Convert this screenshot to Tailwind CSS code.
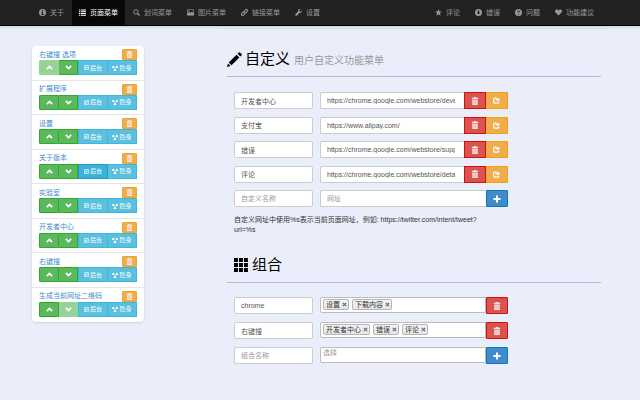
<!DOCTYPE html>
<html lang="zh-CN">
<head>
    <meta charset="UTF-8">
    <meta name="viewport" content="width=device-width, initial-scale=1.0">
    <title>页面菜单</title>
    <script src="https://cdn.jsdelivr.net/npm/@tailwindcss/browser@4"></script>
</head>
<body class="min-h-screen bg-[#eaeefa] font-['Liberation_Sans','Noto_Sans_CJK_SC',sans-serif] text-[7px] leading-[10px] text-[#333]">

    <!-- Icons -->
    <svg class="hidden">
        <symbol id="info" viewBox="0 0 16 16"><path fill="currentColor" fill-rule="evenodd" d="M8 0a8 8 0 1 0 0 16A8 8 0 0 0 8 0zM6.500 2.500h3v2.500h-3zM5.500 6.500h4v5h1.500v2h-5.500v-2h1.500v-3h-1.500z"/></symbol>
        <symbol id="list" viewBox="0 0 16 16"><path fill="currentColor" d="M0 1h3v2.600H0zM4.500 1H16v2.600H4.500zM0 5h3v2.600H0zM4.500 5H16v2.600H4.500zM0 9h3v2.600H0zM4.500 9H16v2.600H4.500zM0 13h3v2.600H0zM4.500 13H16v2.600H4.500z"/></symbol>
        <symbol id="search" viewBox="0 0 16 16"><g fill="none" stroke="currentColor"><circle cx="6.500" cy="6.500" r="5" stroke-width="2.200"/><path d="M10.500 10.500l4.500 4.500" stroke-width="3"/></g></symbol>
        <symbol id="picture" viewBox="0 0 16 16"><path fill="currentColor" fill-rule="evenodd" d="M0 1h16v14H0zM1.500 2.500v8l4-4 2.500 2.500 3-2.500 3.500 3v-7zM4 3.500a1.500 1.500 0 1 1 0 3 1.500 1.500 0 0 1 0-3z"/></symbol>
        <symbol id="link" viewBox="0 0 16 16"><g fill="none" stroke="currentColor" stroke-width="2.200"><rect x="6.500" y="2.500" width="9" height="5.500" rx="2.700" transform="rotate(-50 11 5)"/><rect x=".5" y="8" width="9" height="5.500" rx="2.700" transform="rotate(-50 5 11)"/></g></symbol>
        <symbol id="wrench" viewBox="0 0 16 16"><path fill="currentColor" d="M15.500 3.500l-2.500 2.500-2.500-.5-.5-2.500L12.500.500C9.500-.5 6.500 2 7.200 5.500L.8 12c-1.500 1.800 1.300 4.700 3.200 3.200l6.500-6.400c3.500.7 6-2.300 5-5.300z"/></symbol>
        <symbol id="star" viewBox="0 0 16 16"><path fill="currentColor" d="M8 0l2.200 5.700H16l-4.600 3.700L13 15.500l-5-3.600-5 3.600 1.600-6.100L0 5.700h5.800z"/></symbol>
        <symbol id="down" viewBox="0 0 16 16"><path fill="currentColor" fill-rule="evenodd" d="M8 0a8 8 0 1 0 0 16A8 8 0 0 0 8 0zM6.500 3.500h3v4H12l-4 5-4-5h2.500z"/></symbol>
        <symbol id="question" viewBox="0 0 16 16"><circle cx="8" cy="8" r="8" fill="currentColor"/><path d="M5.500 6.500C5.500 3 10.700 3 10.700 6c0 1.800-2.700 1.700-2.700 3.700M8 11v2" fill="none" stroke="#222" stroke-width="2"/></symbol>
        <symbol id="heart" viewBox="0 0 16 16"><path fill="currentColor" d="M8 15L1.300 8C-1.500 4.500.5 1 4 1c2 0 3.300 1 4 2.500C8.700 2 10 1 12 1c3.500 0 5.500 3.500 2.700 7z"/></symbol>
        <symbol id="trash" viewBox="0 0 16 16"><path fill="currentColor" d="M6 0h4l1 1.500h3.500V4h-13V1.500H5zM2.500 5h11v11h-11z"/><path d="M5.500 7v7M8 7v7M10.500 7v7" stroke="#d9534f" stroke-opacity=".5"/></symbol>
        <symbol id="share" viewBox="0 0 16 16"><path d="M8.500 2.500H4.500a3 3 0 0 0-3 3v5.500a3 3 0 0 0 3 3h6a3 3 0 0 0 3-3v-1" fill="none" stroke="currentColor" stroke-width="2.600"/><path fill="currentColor" d="M10.500 1L16 5.500 10.500 10V7.500C8 7.500 6.500 8.500 5.500 10.500 5.500 6 8 3.700 10.500 3.500z"/></symbol>
        <symbol id="plus" viewBox="0 0 16 16"><path fill="currentColor" d="M6 1h4v5h5v4h-5v5H6v-5H1V6h5z"/></symbol>
        <symbol id="up" viewBox="0 0 16 16"><path d="M2 11.500l6-6 6 6" fill="none" stroke="currentColor" stroke-width="4"/></symbol>
        <symbol id="dn" viewBox="0 0 16 16"><path d="M2 4.500l6 6 6-6" fill="none" stroke="currentColor" stroke-width="4"/></symbol>
        <symbol id="check" viewBox="0 0 16 16"><path d="M1.500 1.500h13v13h-13zM4 5l3.500 6L12 4M4 12l7-6" fill="none" stroke="currentColor" stroke-width="2"/></symbol>
        <symbol id="hazard" viewBox="0 0 16 16"><path fill="currentColor" d="M6.800 6L3.800 1A8 8 0 0 0 0 8h5.600A2.500 2.500 0 0 1 6.800 6zM9.200 6l3-5A8 8 0 0 1 16 8h-5.600a2.500 2.500 0 0 0-1.200-2zM6.800 10.200l-2.800 4.800a8 8 0 0 0 8 0l-2.800-4.800a2.500 2.500 0 0 1-2.400 0z"/><circle cx="8" cy="8" r="1.600" fill="currentColor"/></symbol>
        <symbol id="pencil" viewBox="0 0 16 16"><path fill="currentColor" d="M0 16l1-3.800 2.800 2.800zM1.800 11.200L10.200 2.800 13.200 5.800 4.800 14.200zM11.200 1.800L12.600.4q.6-.5 1.200 0l1.800 1.800q.5.600 0 1.200L14.200 4.800z"/></symbol>
        <symbol id="grid" viewBox="0 0 16 16"><path fill="currentColor" d="M0 0h4.500v4.500H0zM5.700 0h4.500v4.500H5.700zM11.400 0h4.500v4.500h-4.500zM0 5.700h4.500v4.500H0zM5.700 5.700h4.500v4.500H5.700zM11.400 5.700h4.500v4.500h-4.500zM0 11.400h4.500v4.500H0zM5.700 11.400h4.500v4.500H5.700zM11.400 11.400h4.500v4.500h-4.500z"/></symbol>
        <symbol id="close" viewBox="0 0 16 16"><path d="M2.500 2.500l11 11M13.500 2.500l-11 11" stroke="currentColor" stroke-width="3.500"/></symbol>
    </svg>

    <nav class="flex h-[26px] justify-between border-b border-black bg-[#222] pl-8 pr-[39px] text-[#999] shadow-sm">
        <div id="nav-left" class="flex gap-px"></div>
        <div id="nav-right" class="flex gap-px"></div>
    </nav>

    <div class="flex items-start pl-8">
        <ul id="menu" class="mt-5 grid min-h-[276px] w-[112px] shrink-0 auto-rows-fr divide-y divide-[#e5e5e5] rounded bg-white shadow-sm"></ul>

        <main class="ml-[75px] mr-[31px] min-w-0 flex-1">
            <div class="h-[3px] border-x border-b border-[#dcdfe6]"></div>
            <div class="px-2">
                <section>
                    <h1 class="mt-5 flex items-center border-b border-[#b6bad4] pb-[7px] text-[15px] leading-5 text-black">
                        <svg class="mr-[3px] size-[15px]"><use href="#pencil"/></svg>自定义<small class="ml-1 mt-1 text-[10px] leading-4 text-[#999]">用户自定义功能菜单</small>
                    </h1>
                    <div id="customs" class="ml-[7px] mt-[15px] flex min-h-[115px] max-w-[274px] flex-col justify-between"></div>
                    <p class="ml-[7px] mt-2 max-w-[250px]">自定义网址中使用%s表示当前页面网址，例如: https://twitter.com/intent/tweet?url=%s</p>
                </section>
                <section>
                    <h2 class="mt-5 flex items-center border-b border-[#b6bad4] pb-[7px] pl-[7px] text-[15px] leading-5 text-black">
                        <svg class="mr-1 size-[14px]"><use href="#grid"/></svg>组合
                    </h2>
                    <div id="groups" class="ml-[7px] mt-[14px] flex max-w-[274px] flex-col gap-2"></div>
                </section>
            </div>
        </main>
    </div>

    <script>
        const navLeft = [['info', '关于'], ['list', '页面菜单'], ['search', '划词菜单'], ['picture', '图片菜单'], ['link', '链接菜单'], ['wrench', '设置']];
        const navRight = [['star', '评论'], ['down', '错误'], ['question', '问题'], ['heart', '功能建议']];
        const menu = ['右键搜 选项', '扩展程序', '设置', '关于版本', '实验室', '开发者中心', '右键搜', '生成当前网址二维码'];
        const customs = [
            ['开发者中心', 'https://chrome.google.com/webstore/developer/dashboard'],
            ['支付宝', 'https://www.alipay.com/'],
            ['错误', 'https://chrome.google.com/webstore/support'],
            ['评论', 'https://chrome.google.com/webstore/detail'],
            ['', '']
        ];
        const groups = [
            ['chrome', ['设置', '下载内容']],
            ['右键搜', ['开发者中心', '错误', '评论']],
            ['', []]
        ];

        const icon = (name, size) => `<svg class="${size} shrink-0"><use href="#${name}"/></svg>`;
        const fill = (id, html) => { document.getElementById(id).innerHTML = html; };

        const navItem = ([name, label]) => `
            <a href="#" class="flex items-center gap-1 px-[7px] ${label === '页面菜单' ? 'bg-[#080808] text-white' : ''}">${icon(name, 'size-[7px]')}${label}</a>`;
        fill('nav-left', navLeft.map(navItem).join(''));
        fill('nav-right', navRight.map(navItem).join(''));

        const green = 'border-[#2cab2c] bg-[#5cb85c]';
        const faded = 'border-[#96d396] bg-[#96d396]';
        const cyan = 'border-[#3db8dc] bg-[#5bc0de]';
        fill('menu', menu.map((title, i) => `
            <li class="px-[7px] pt-[3px]">
                <div class="flex items-center justify-between">
                    <a href="#" class="text-[#428bca]">${title}</a>
                    <button aria-label="删除" class="flex h-[11px] w-[15px] items-center justify-center rounded-[1px] border border-[#f0a530] bg-[#f0ad4e] text-white/80">${icon('trash', 'size-[7px]')}</button>
                </div>
                <div class="flex h-[15px] text-[6px] text-white">
                    <button aria-label="上移" class="flex w-5 items-center justify-center rounded-l-[1px] border ${i === 0 ? faded : green}">${icon('up', 'size-[7px]')}</button>
                    <button aria-label="下移" class="flex w-[19px] items-center justify-center border border-l-0 ${i === menu.length - 1 ? faded : green}">${icon('dn', 'size-[7px]')}</button>
                    <button class="flex flex-1 items-center justify-center gap-px border ${title === '关于版本' ? 'border-[#1d9cc4] bg-[#39b3d7]' : cyan}">${icon('check', 'size-[5px]')}后台</button>
                    <button class="flex flex-1 items-center justify-center gap-px rounded-r-[1px] border border-l-0 ${cyan}">${icon('hazard', 'size-[6px]')}隐身</button>
                </div>
            </li>`).join(''));

        const nameInput = (value, hint) => `
            <input type="text" aria-label="${hint}" placeholder="${hint}" value="${value}" class="h-[17px] w-[79px] rounded-xs border border-[#ccc] bg-white px-[6px] text-[#555] placeholder:text-[#999]">`;
        const trashButton = `
            <button aria-label="删除" class="flex h-[17px] w-[22px] shrink-0 items-center justify-center border border-[#d2100f] bg-[#d9534f] text-white/80 last:rounded-r-[1px]">${icon('trash', 'size-2')}</button>`;
        const shareButton = `
            <button aria-label="打开" class="flex h-[17px] w-[22px] shrink-0 items-center justify-center rounded-r-[1px] border border-l-0 border-[#f0a30a] bg-[#f0ad4e] text-white">${icon('share', 'size-[7px]')}</button>`;
        const plusButton = `
            <button aria-label="添加" class="flex h-[17px] w-[22px] shrink-0 items-center justify-center rounded-r-[1px] border border-[#0f75bf] bg-[#428bca] text-white">${icon('plus', 'size-2')}</button>`;

        fill('customs', customs.map(([name, url]) => `
            <div class="flex gap-[7px]">
                ${nameInput(name, '自定义名称')}
                <div class="flex min-w-0 flex-1">
                    <input type="text" aria-label="网址" placeholder="网址" value="${url}" class="h-[17px] min-w-0 flex-1 rounded-l-xs border border-r-0 border-[#ccc] bg-white pl-[6px] pr-[9px] text-[#555] placeholder:text-[#999]">
                    ${name ? trashButton + shareButton : plusButton}
                </div>
            </div>`).join(''));

        const tag = label => `
            <span class="flex h-[11px] items-center gap-px rounded-xs border border-[#b5b5b5] bg-linear-to-b from-[#f4f4f4] to-[#e6e6e6] pl-[2px] pr-px">${label}<button aria-label="移除${label}" class="flex w-[6px] justify-center text-[#666]">${icon('close', 'size-[5px]')}</button></span>`;
        fill('groups', groups.map(([name, tags]) => `
            <div class="flex gap-[7px]">
                ${nameInput(name, '组合名称')}
                <div class="flex min-w-0 flex-1">
                    <div class="flex h-4 min-w-0 flex-1 gap-[3px] rounded-l-xs border border-[#bbb] bg-white px-[2px] pt-px">
                        ${tags.map(tag).join('')}
                        ${tags.length ? '' : '<input type="text" aria-label="选择" placeholder="选择" class="h-2 min-w-0 flex-1 placeholder:text-[#999]">'}
                    </div>
                    ${name ? trashButton : plusButton}
                </div>
            </div>`).join(''));
    </script>
</body>
</html>
